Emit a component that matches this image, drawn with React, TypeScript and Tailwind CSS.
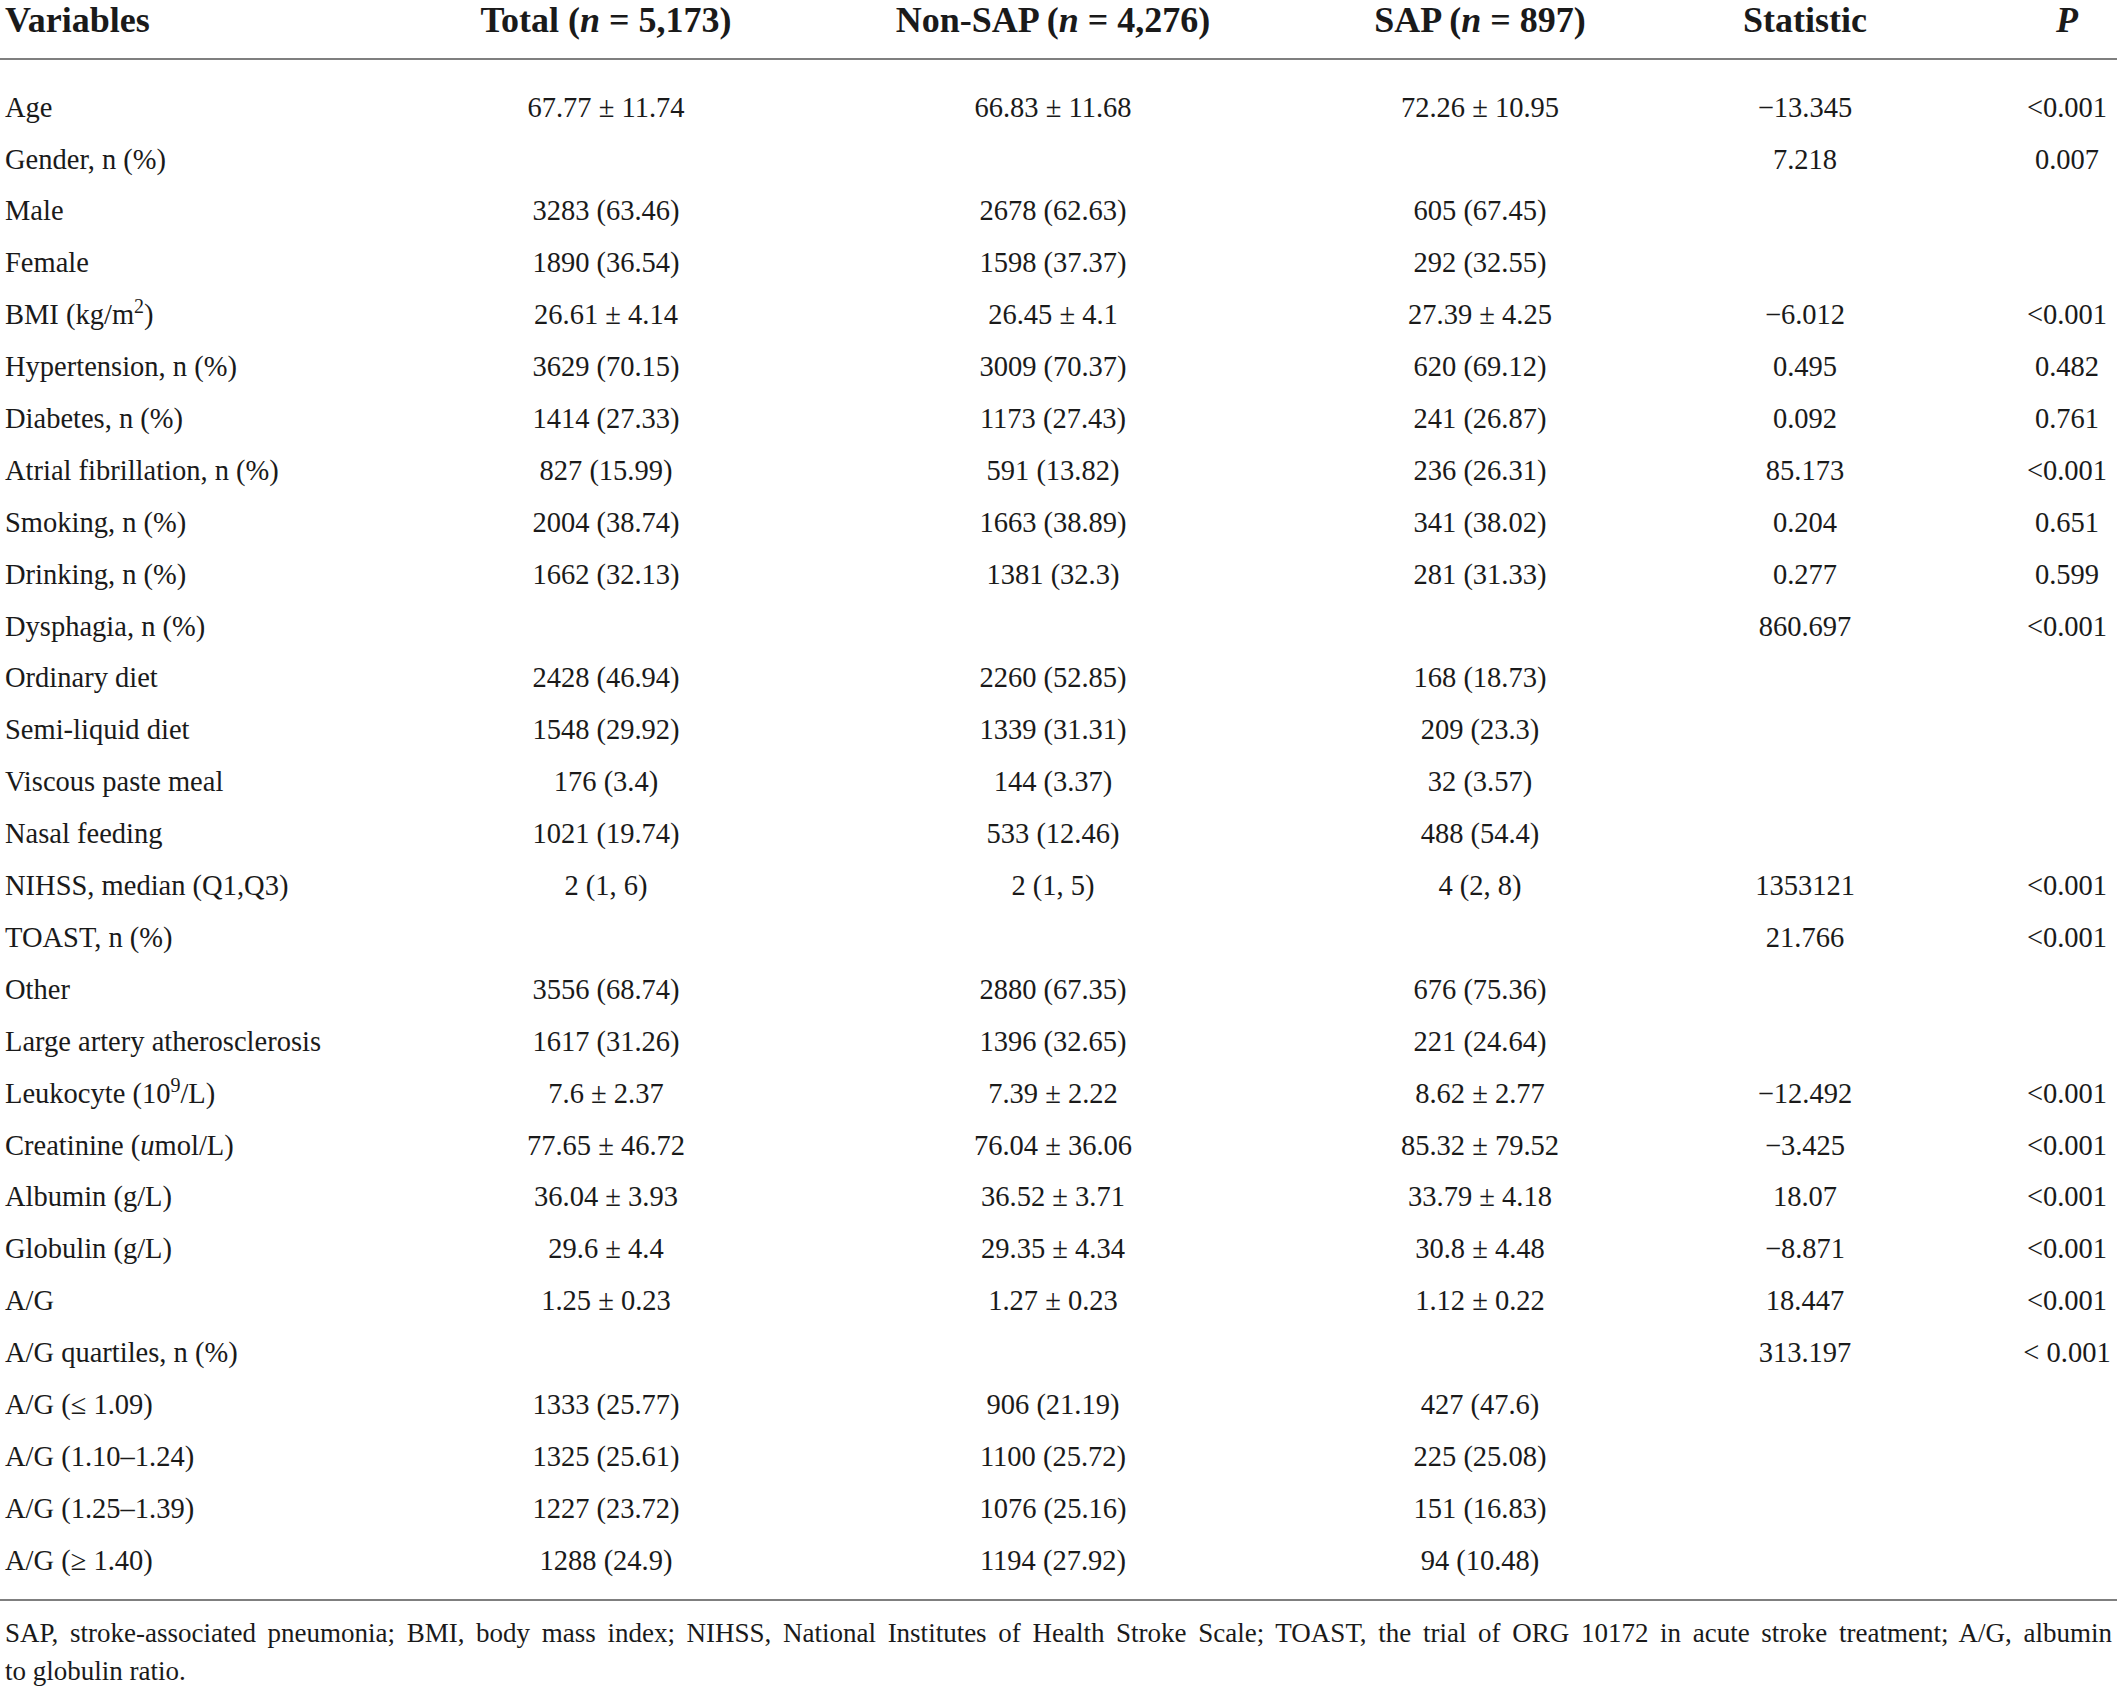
import React from 'react';

type Row = {
  label: React.ReactNode;
  total?: string;
  nonSap?: string;
  sap?: string;
  stat?: string;
  p?: string;
};

const ROWS: Row[] = [
  { label: 'Age', total: '67.77 ± 11.74', nonSap: '66.83 ± 11.68', sap: '72.26 ± 10.95', stat: '−13.345', p: '<0.001' },
  { label: 'Gender, n (%)', stat: '7.218', p: '0.007' },
  { label: 'Male', total: '3283 (63.46)', nonSap: '2678 (62.63)', sap: '605 (67.45)' },
  { label: 'Female', total: '1890 (36.54)', nonSap: '1598 (37.37)', sap: '292 (32.55)' },
  {
    label: (
      <>
        BMI (kg/m<sup className="text-[20px] relative -top-[11px] align-baseline">2</sup>)
      </>
    ),
    total: '26.61 ± 4.14',
    nonSap: '26.45 ± 4.1',
    sap: '27.39 ± 4.25',
    stat: '−6.012',
    p: '<0.001',
  },
  { label: 'Hypertension, n (%)', total: '3629 (70.15)', nonSap: '3009 (70.37)', sap: '620 (69.12)', stat: '0.495', p: '0.482' },
  { label: 'Diabetes, n (%)', total: '1414 (27.33)', nonSap: '1173 (27.43)', sap: '241 (26.87)', stat: '0.092', p: '0.761' },
  { label: 'Atrial fibrillation, n (%)', total: '827 (15.99)', nonSap: '591 (13.82)', sap: '236 (26.31)', stat: '85.173', p: '<0.001' },
  { label: 'Smoking, n (%)', total: '2004 (38.74)', nonSap: '1663 (38.89)', sap: '341 (38.02)', stat: '0.204', p: '0.651' },
  { label: 'Drinking, n (%)', total: '1662 (32.13)', nonSap: '1381 (32.3)', sap: '281 (31.33)', stat: '0.277', p: '0.599' },
  { label: 'Dysphagia, n (%)', stat: '860.697', p: '<0.001' },
  { label: 'Ordinary diet', total: '2428 (46.94)', nonSap: '2260 (52.85)', sap: '168 (18.73)' },
  { label: 'Semi-liquid diet', total: '1548 (29.92)', nonSap: '1339 (31.31)', sap: '209 (23.3)' },
  { label: 'Viscous paste meal', total: '176 (3.4)', nonSap: '144 (3.37)', sap: '32 (3.57)' },
  { label: 'Nasal feeding', total: '1021 (19.74)', nonSap: '533 (12.46)', sap: '488 (54.4)' },
  { label: 'NIHSS, median (Q1,Q3)', total: '2 (1, 6)', nonSap: '2 (1, 5)', sap: '4 (2, 8)', stat: '1353121', p: '<0.001' },
  { label: 'TOAST, n (%)', stat: '21.766', p: '<0.001' },
  { label: 'Other', total: '3556 (68.74)', nonSap: '2880 (67.35)', sap: '676 (75.36)' },
  { label: 'Large artery atherosclerosis', total: '1617 (31.26)', nonSap: '1396 (32.65)', sap: '221 (24.64)' },
  {
    label: (
      <>
        Leukocyte (10<sup className="text-[20px] relative -top-[11px] align-baseline">9</sup>/L)
      </>
    ),
    total: '7.6 ± 2.37',
    nonSap: '7.39 ± 2.22',
    sap: '8.62 ± 2.77',
    stat: '−12.492',
    p: '<0.001',
  },
  {
    label: (
      <>
        Creatinine (<i>u</i>mol/L)
      </>
    ),
    total: '77.65 ± 46.72',
    nonSap: '76.04 ± 36.06',
    sap: '85.32 ± 79.52',
    stat: '−3.425',
    p: '<0.001',
  },
  { label: 'Albumin (g/L)', total: '36.04 ± 3.93', nonSap: '36.52 ± 3.71', sap: '33.79 ± 4.18', stat: '18.07', p: '<0.001' },
  { label: 'Globulin (g/L)', total: '29.6 ± 4.4', nonSap: '29.35 ± 4.34', sap: '30.8 ± 4.48', stat: '−8.871', p: '<0.001' },
  { label: 'A/G', total: '1.25 ± 0.23', nonSap: '1.27 ± 0.23', sap: '1.12 ± 0.22', stat: '18.447', p: '<0.001' },
  { label: 'A/G quartiles, n (%)', stat: '313.197', p: '< 0.001' },
  { label: 'A/G (≤ 1.09)', total: '1333 (25.77)', nonSap: '906 (21.19)', sap: '427 (47.6)' },
  { label: 'A/G (1.10–1.24)', total: '1325 (25.61)', nonSap: '1100 (25.72)', sap: '225 (25.08)' },
  { label: 'A/G (1.25–1.39)', total: '1227 (23.72)', nonSap: '1076 (25.16)', sap: '151 (16.83)' },
  { label: 'A/G (≥ 1.40)', total: '1288 (24.9)', nonSap: '1194 (27.92)', sap: '94 (10.48)' },
];

const GRID = 'grid grid-cols-[473px_266px_628px_226px_424px_100px]';

const App: React.FC = () => {
  return (
    <div className="w-[2117px] min-h-[1690px] bg-white text-[#1a1a1a] font-['Liberation_Serif','DejaVu_Serif',serif]">
      {/* Header */}
      <div className={`${GRID} h-[60px] border-b-2 border-[#7f7f7f] text-[36px] font-bold leading-[40px]`}>
        <div className="pl-[5px] whitespace-nowrap">Variables</div>
        <div className="text-center whitespace-nowrap">
          Total (<i>n</i> = 5,173)
        </div>
        <div className="text-center whitespace-nowrap">
          Non-SAP (<i>n</i> = 4,276)
        </div>
        <div className="text-center whitespace-nowrap">
          SAP (<i>n</i> = 897)
        </div>
        <div className="text-center whitespace-nowrap">Statistic</div>
        <div className="text-center whitespace-nowrap">
          <i>P</i>
        </div>
      </div>

      {/* Body */}
      <div className="pt-[22px] pb-[12px] border-b-2 border-[#7f7f7f] text-[28.5px]">
        {ROWS.map((r, i) => (
          <div key={i} className={`${GRID} h-[51.9px] items-center leading-none whitespace-nowrap`}>
            <div className="pl-[5px]">{r.label}</div>
            <div className="text-center">{r.total}</div>
            <div className="text-center">{r.nonSap}</div>
            <div className="text-center">{r.sap}</div>
            <div className="text-center">{r.stat}</div>
            <div className="text-center">{r.p}</div>
          </div>
        ))}
      </div>

      {/* Footnote */}
      <div className="mt-[13px] px-[5px] text-[27px] leading-[38px]">
        <div className="text-justify [text-align-last:justify]">
          SAP, stroke-associated pneumonia; BMI, body mass index; NIHSS, National Institutes of Health Stroke Scale; TOAST, the
          trial of ORG 10172 in acute stroke treatment; A/G, albumin
        </div>
        <div>to globulin ratio.</div>
      </div>
    </div>
  );
};

export default App;
